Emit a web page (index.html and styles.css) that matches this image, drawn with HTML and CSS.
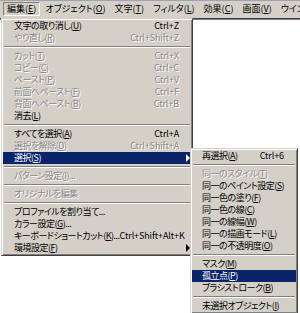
FILE: index.html
```html
<!DOCTYPE html>
<html lang="ja">
<head>
  <meta charset="UTF-8" />
  <title>編集メニュー</title>
  <link rel="stylesheet" href="styles.css">
</head>
<body>

<div class="app">
  <div class="menubar">
    <span class="mb-item pressed">編集(<u>E</u>)</span>
    <span class="mb-item">オブジェクト(<u>O</u>)</span>
    <span class="mb-item">文字(<u>T</u>)</span>
    <span class="mb-item">フィルタ(<u>L</u>)</span>
    <span class="mb-item">効果(<u>C</u>)</span>
    <span class="mb-item">画面(<u>V</u>)</span>
    <span class="mb-item">ウインドウ</span>
  </div>
  <div class="workspace"></div>

  <!-- edit menu -->
  <div class="menu main-menu">
    <div class="item"><span>文字の取り消し(<u>U</u>)</span><span class="key">Ctrl+Z</span></div>
    <div class="item off"><span>やり直し(<u>R</u>)</span><span class="key">Ctrl+Shift+Z</span></div>
    <div class="sep"></div>
    <div class="item off"><span>カット(<u>T</u>)</span><span class="key">Ctrl+X</span></div>
    <div class="item off"><span>コピー(<u>C</u>)</span><span class="key">Ctrl+C</span></div>
    <div class="item off"><span>ペースト(<u>P</u>)</span><span class="key">Ctrl+V</span></div>
    <div class="item off"><span>前面へペースト(<u>F</u>)</span><span class="key">Ctrl+F</span></div>
    <div class="item off"><span>背面へペースト(<u>B</u>)</span><span class="key">Ctrl+B</span></div>
    <div class="item"><span>消去(<u>L</u>)</span></div>
    <div class="sep"></div>
    <div class="item"><span>すべてを選択(<u>A</u>)</span><span class="key">Ctrl+A</span></div>
    <div class="item off"><span>選択を解除(<u>D</u>)</span><span class="key">Ctrl+Shift+A</span></div>
    <div class="item active"><span>選択(<u>S</u>)</span><span class="arrow"></span></div>
    <div class="sep"></div>
    <div class="item off"><span>パターン設定(<u>I</u>)...</span></div>
    <div class="sep"></div>
    <div class="item off"><span>オリジナルを編集</span></div>
    <div class="sep"></div>
    <div class="item"><span>プロファイルを割り当て...</span></div>
    <div class="item"><span>カラー設定(<u>G</u>)...</span></div>
    <div class="item"><span>キーボードショートカット(<u>K</u>)...</span><span class="key">Ctrl+Shift+Alt+K</span></div>
    <div class="item"><span>環境設定(<u>F</u>)</span><span class="arrow"></span></div>
  </div>

  <!-- select submenu -->
  <div class="menu sub-menu">
    <div class="item"><span>再選択(<u>A</u>)</span><span class="key">Ctrl+6</span></div>
    <div class="sep"></div>
    <div class="item off"><span>同一のスタイル(<u>T</u>)</span></div>
    <div class="item"><span>同一のペイント設定(<u>S</u>)</span></div>
    <div class="item"><span>同一色の塗り(<u>F</u>)</span></div>
    <div class="item"><span>同一色の線(<u>C</u>)</span></div>
    <div class="item"><span>同一の線幅(<u>W</u>)</span></div>
    <div class="item"><span>同一の描画モード(<u>L</u>)</span></div>
    <div class="item"><span>同一の不透明度(<u>O</u>)</span></div>
    <div class="sep"></div>
    <div class="item"><span>マスク(<u>M</u>)</span></div>
    <div class="item active"><span>孤立点(<u>P</u>)</span></div>
    <div class="item"><span>ブラシストローク(<u>B</u>)</span></div>
    <div class="sep"></div>
    <div class="item"><span>未選択オブジェクト(<u>I</u>)</span></div>
  </div>
</div>

</body>
</html>
```

FILE: styles.css
```css
* {
  box-sizing: border-box;
}
body {
  margin: 0;
  background: #ffffff;
  font-family: "Noto Sans CJK JP", "Liberation Sans", sans-serif;
  font-size: 9px;
  font-feature-settings: "palt";
  color: #000;
}
u {
  text-decoration: underline;
  text-underline-offset: 1px;
}
.app {
  position: relative;
  width: 300px;
  height: 313px;
  overflow: hidden;
}
.menubar {
  height: 18px;
  background: #d4d0c8;
  border-top: 1px solid #9ea3b0;
  display: flex;
  align-items: flex-start;
  padding: 1px 0 0 3px;
  white-space: nowrap;
}
.mb-item {
  height: 14px;
  line-height: 12px;
  padding: 0 3px;
  border: 1px solid transparent;
  margin-right: 1px;
}
.mb-item.pressed {
  border-color: #808080 #ffffff #ffffff #808080;
}
.workspace {
  height: 295px;
  border-top: 1px solid #404040;
  box-shadow: inset 0 1px #808080;
}
.menu {
  position: absolute;
  background: #d4d0c8;
  border: 1px solid;
  border-color: #d4d0c8 #404040 #404040 #d4d0c8;
  box-shadow: inset 1px 1px #ffffff, inset -1px -1px #808080;
  padding: 1px;
  white-space: nowrap;
}
.main-menu {
  left: 1px;
  top: 18px;
  width: 192px;
}
.sub-menu {
  left: 190px;
  top: 148px;
  width: 108px;
}
.item {
  display: flex;
  align-items: center;
  height: 12px;
  line-height: 12px;
  padding: 0 12px 0 11px;
  letter-spacing: -0.5px;
}
.sub-menu .item {
  padding-left: 10px;
}
.item .key {
  margin-left: auto;
  letter-spacing: -0.1px;
}
.item.off {
  color: #8a8a8a;
  text-shadow: 1px 1px 0 #ffffff;
}
.item.active {
  background: #0a246a;
  color: #ffffff;
}
.arrow {
  margin-left: auto;
  margin-right: -11px;
  width: 0;
  height: 0;
  border-left: 4px solid currentColor;
  border-top: 4px solid transparent;
  border-bottom: 4px solid transparent;
}
.sep {
  margin: 2px 1px;
  border-top: 1px solid #808080;
  border-bottom: 1px solid #ffffff;
}
```
